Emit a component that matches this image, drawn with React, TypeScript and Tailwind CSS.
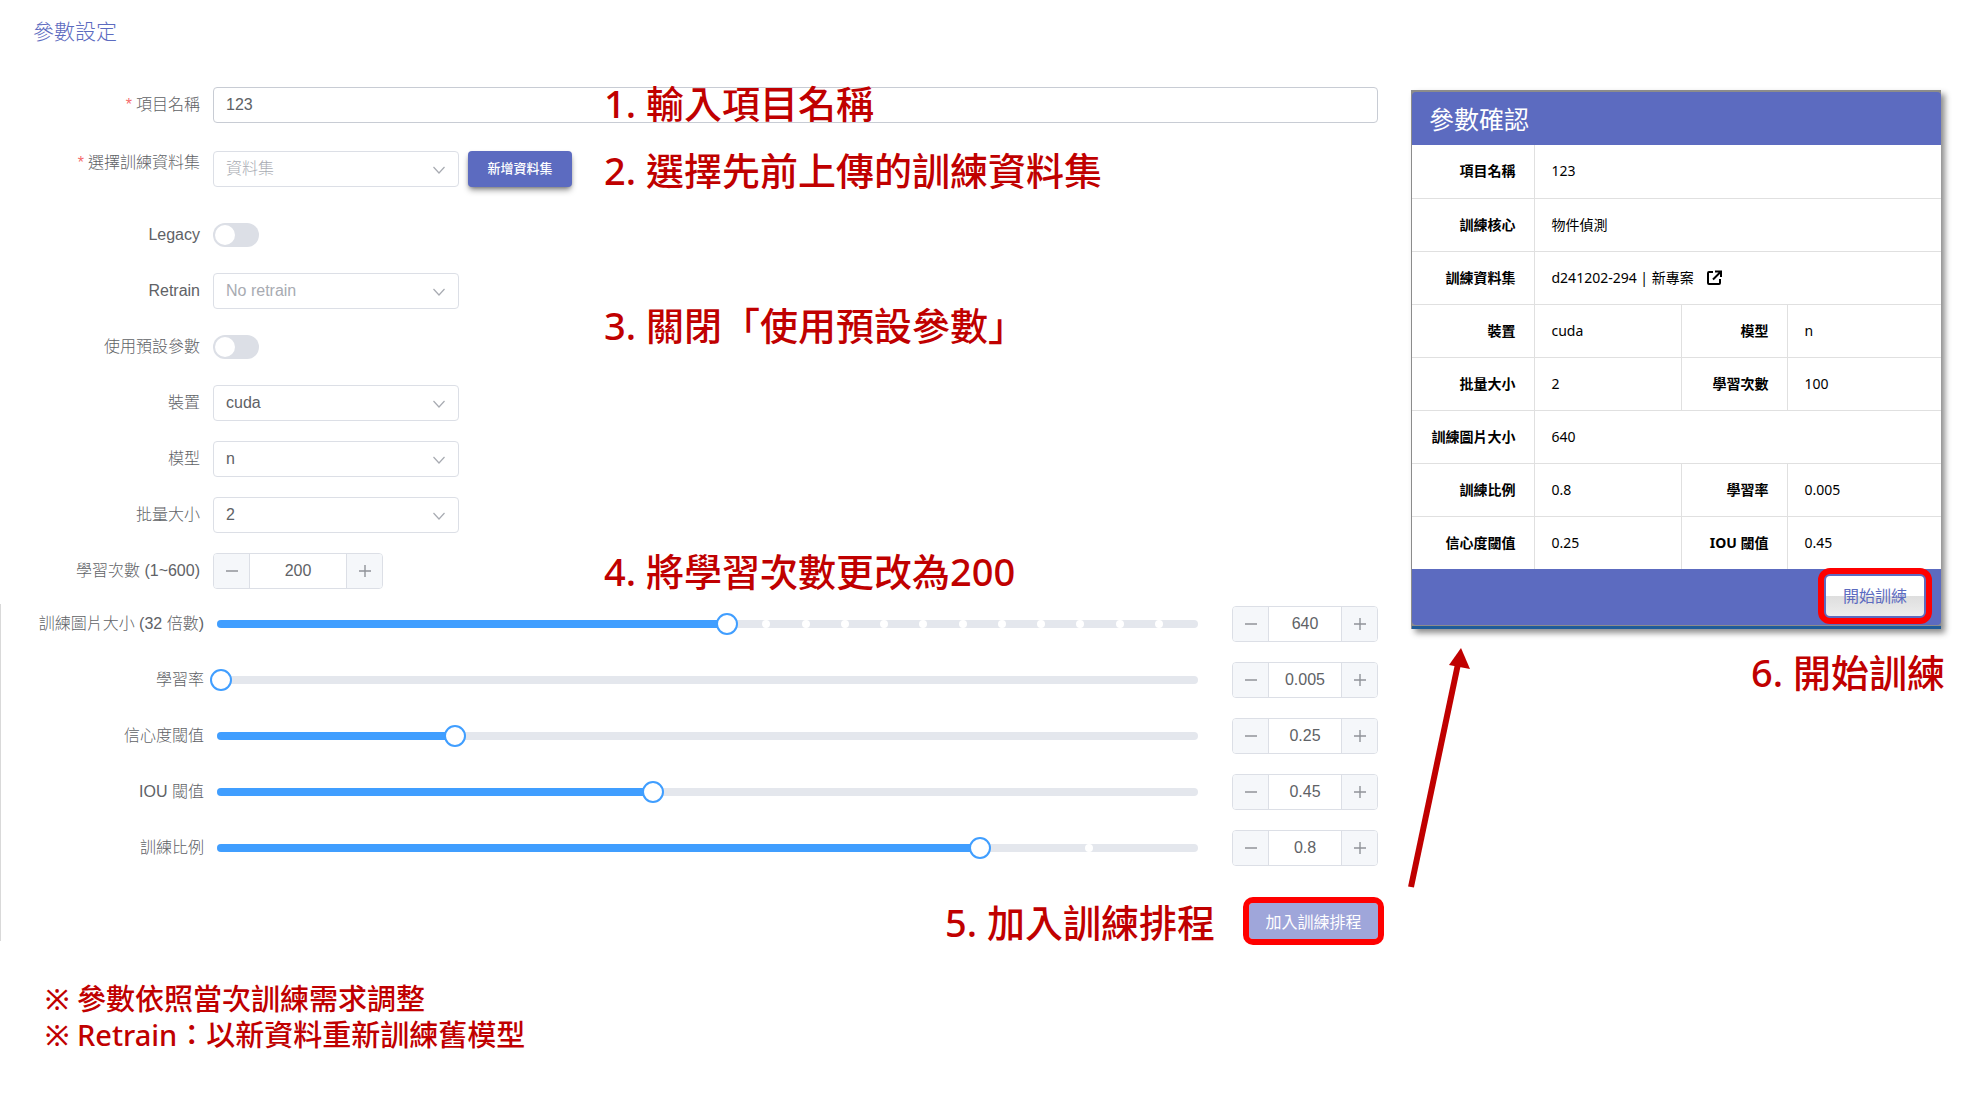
import { useState, type ReactNode } from "react";

const formFont = "font-['Liberation_Sans','Noto_Sans_CJK_TC',sans-serif]";
const noteFont = "font-['Noto_Sans','Noto_Sans_CJK_TC',sans-serif]";

function Note({ children, className = "" }: { children: ReactNode; className?: string }) {
  return (
    <p className={`${noteFont} text-[38px] leading-[48px] font-medium whitespace-nowrap text-[#c00000] ${className}`}>
      {children}
    </p>
  );
}

function Row({
  id,
  label,
  required,
  wide,
  top,
  children,
}: {
  id: string;
  label: string;
  required?: boolean;
  wide?: boolean;
  top?: boolean;
  children: ReactNode;
}) {
  return (
    <div className="flex h-9 items-center">
      <label
        htmlFor={id}
        className={`mr-[13px] shrink-0 text-right whitespace-nowrap ${wide ? "w-[203px]" : "w-[200px]"} ${top ? "self-start leading-5" : ""}`}
      >
        {required && <span className="mr-1 text-base text-[#f56c6c]">*</span>}
        {label}
      </label>
      {children}
    </div>
  );
}

function Select({ id, value, muted }: { id: string; value: string; muted?: boolean }) {
  return (
    <div className="relative w-[246px] shrink-0">
      <select
        id={id}
        defaultValue={value}
        className={`block h-9 w-full appearance-none rounded border border-[#dcdfe6] bg-white pr-9 pl-3 ${muted ? "text-[#a8abb2]" : "text-[#606266]"}`}
      >
        <option>{value}</option>
      </select>
      <svg
        className="pointer-events-none absolute top-3 right-3 h-3.5 w-3.5"
        viewBox="0 0 14 14"
        fill="none"
        stroke="#a8abb2"
        strokeWidth="1.2"
      >
        <path d="M0.500 4l5.500 6 5.500-6" />
      </svg>
    </div>
  );
}

function Switch({ id }: { id: string }) {
  return (
    <input
      id={id}
      type="checkbox"
      role="switch"
      className="relative h-6 w-[46px] appearance-none rounded-full bg-[#dcdfe6] before:absolute before:top-0.5 before:left-0.5 before:h-5 before:w-5 before:rounded-full before:bg-white checked:bg-[#409eff] checked:before:left-6"
    />
  );
}

function Stepper({
  id,
  label,
  value,
  onStep,
  onChange,
  wide,
}: {
  id: string;
  label: string;
  value: string;
  onStep: (direction: number) => void;
  onChange: (text: string) => void;
  wide?: boolean;
}) {
  const button = "flex w-9 shrink-0 items-center justify-center bg-[#f5f7fa]";
  return (
    <div
      className={`flex h-9 shrink-0 overflow-hidden rounded border border-[#dcdfe6] ${wide ? "w-[170px]" : "w-[146px]"}`}
    >
      <button type="button" aria-label={`${label} −`} onClick={() => onStep(-1)} className={`${button} border-r border-[#dcdfe6]`}>
        <svg className="h-3.5 w-3.5" viewBox="0 0 14 14" stroke="#909399" strokeWidth="1.4">
          <path d="M1 7h12" />
        </svg>
      </button>
      <input
        id={id}
        aria-label={label}
        value={value}
        onChange={(e) => onChange(e.target.value)}
        className="w-0 min-w-0 flex-1 bg-white text-center"
      />
      <button type="button" aria-label={`${label} +`} onClick={() => onStep(1)} className={`${button} border-l border-[#dcdfe6]`}>
        <svg className="h-3.5 w-3.5" viewBox="0 0 14 14" stroke="#909399" strokeWidth="1.4">
          <path d="M1 7h12M7 1v12" />
        </svg>
      </button>
    </div>
  );
}

type SliderSpec = {
  id: string;
  label: string;
  min: number;
  max: number;
  step: number;
  start: number;
  stops?: number;
};

const sliders: SliderSpec[] = [
  { id: "imgsz", label: "訓練圖片大小 (32 倍數)", min: 224, max: 1024, step: 32, start: 640, stops: 25 },
  { id: "lr", label: "學習率", min: 0.001, max: 1, step: 0.001, start: 0.005 },
  { id: "conf", label: "信心度閾值", min: 0.01, max: 1, step: 0.01, start: 0.25 },
  { id: "iou", label: "IOU 閾值", min: 0.01, max: 1, step: 0.01, start: 0.45 },
  { id: "ratio", label: "訓練比例", min: 0.1, max: 1, step: 0.1, start: 0.8, stops: 9 },
];

function SliderRow({ spec }: { spec: SliderSpec }) {
  const [value, setValue] = useState(spec.start);
  const { min, max, step, stops = 0 } = spec;
  const set = (next: number) => {
    if (!Number.isNaN(next)) setValue(Number(Math.min(max, Math.max(min, next)).toFixed(3)));
  };
  const percent = ((value - min) / (max - min)) * 100;
  const marks = Array.from({ length: Math.max(0, stops - 1) }, (_, i) => ((i + 1) / stops) * 100).filter(
    (mark) => mark > percent + 1,
  );
  return (
    <Row id={spec.id} label={spec.label} wide>
      <div className="relative mr-[34px] h-2 min-w-0 flex-1 rounded-full bg-[#e4e7ed]">
        <div className="h-2 rounded-full bg-[#409eff]" style={{ width: `${percent}%` }} />
        {marks.map((mark) => (
          <span
            key={mark}
            className="absolute top-0 h-2 w-2 -translate-x-1/2 rounded-full bg-white"
            style={{ left: `${mark}%` }}
          />
        ))}
        <input
          id={spec.id}
          type="range"
          min={min}
          max={max}
          step={step}
          value={value}
          onChange={(e) => set(Number(e.target.value))}
          className="absolute -top-2 -left-[11px] h-6 w-[calc(100%+22px)] appearance-none bg-transparent [&::-webkit-slider-thumb]:h-[22px] [&::-webkit-slider-thumb]:w-[22px] [&::-webkit-slider-thumb]:appearance-none [&::-webkit-slider-thumb]:rounded-full [&::-webkit-slider-thumb]:border-2 [&::-webkit-slider-thumb]:border-[#409eff] [&::-webkit-slider-thumb]:bg-white"
        />
      </div>
      <Stepper
        id={`${spec.id}-value`}
        label={spec.label}
        value={String(value)}
        onStep={(direction) => set(value + direction * step)}
        onChange={(text) => set(Number(text))}
      />
    </Row>
  );
}

function SettingsForm() {
  const [epochs, setEpochs] = useState(200);
  const setEpochCount = (next: number) => {
    if (!Number.isNaN(next)) setEpochs(Math.min(600, Math.max(1, next)));
  };
  return (
    <form
      className={`${formFont} min-w-0 flex-1 text-base font-light text-[#606266]`}
      onSubmit={(e) => e.preventDefault()}
    >
      <h1 className="pt-4 pl-[33px] text-[21px] leading-8 text-[#5c6bc0]">參數設定</h1>

      <div className="relative mt-[39px]">
        <Row id="name" label="項目名稱" required>
          <input
            id="name"
            defaultValue="123"
            className="h-9 min-w-0 flex-1 rounded border border-[#c8ccd4] bg-white px-3"
          />
        </Row>
        <Note className="pointer-events-none absolute -top-2 left-[604px]">1. 輸入項目名稱</Note>
      </div>

      <div className="mt-7">
        <Row id="dataset" label="選擇訓練資料集" required top>
          <Select id="dataset" value="資料集" muted />
          <button
            type="button"
            className="ml-[9px] h-9 w-[104px] shrink-0 rounded bg-[#5c6bc0] text-[13px] font-medium text-white shadow-md shadow-black/40"
          >
            新增資料集
          </button>
          <Note className="ml-8 pt-0.5">2. 選擇先前上傳的訓練資料集</Note>
        </Row>
      </div>

      <div className="mt-[30px] flex flex-col gap-5">
        <Row id="legacy" label="Legacy">
          <Switch id="legacy" />
        </Row>
        <div className="flex items-center">
          <div className="flex w-[459px] flex-col gap-5">
            <Row id="retrain" label="Retrain">
              <Select id="retrain" value="No retrain" muted />
            </Row>
            <Row id="defaults" label="使用預設參數">
              <Switch id="defaults" />
            </Row>
          </div>
          <Note className="ml-[145px] pt-3">3. 關閉「使用預設參數」</Note>
        </div>
        <Row id="device" label="裝置">
          <Select id="device" value="cuda" />
        </Row>
        <Row id="model" label="模型">
          <Select id="model" value="n" />
        </Row>
        <Row id="batch" label="批量大小">
          <Select id="batch" value="2" />
        </Row>
        <Row id="epochs" label="學習次數 (1~600)">
          <Stepper
            id="epochs"
            label="學習次數"
            value={String(epochs)}
            onStep={(direction) => setEpochCount(epochs + direction)}
            onChange={(text) => setEpochCount(Number(text))}
            wide
          />
          <Note className="ml-[221px]">4. 將學習次數更改為200</Note>
        </Row>
      </div>

      <div className="mt-[15px] flex flex-col gap-5 border-l border-[#d9d9d9] py-0.5">
        {sliders.map((spec) => (
          <SliderRow key={spec.id} spec={spec} />
        ))}
        <div className="mt-[17px] flex h-9 items-center justify-end">
          <Note className="mr-[34px] pt-0.5">5. 加入訓練排程</Note>
          <button
            type="submit"
            className="h-9 w-[129px] rounded-sm bg-[#9fa6da] pt-1 font-normal text-white outline-6 outline-[#ff0000]"
          >
            加入訓練排程
          </button>
        </div>
      </div>

      <div className={`${noteFont} mt-10 pl-[45px] text-[29px] leading-9 font-medium text-[#c00000]`}>
        <p>※ 參數依照當次訓練需求調整</p>
        <p>※ Retrain：以新資料重新訓練舊模型</p>
      </div>
    </form>
  );
}

const summary: [string, ReactNode, string?, string?][] = [
  ["項目名稱", "123"],
  ["訓練核心", "物件偵測"],
  [
    "訓練資料集",
    <span key="dataset" className="flex items-center gap-3">
      d241202-294 | 新專案
      <a href="#dataset" aria-label="新專案">
        <svg className="h-4 w-4" viewBox="0 0 16 16" fill="none" stroke="#000" strokeWidth="2">
          <path d="M7 2H3Q2 2 2 3v10q0 1 1 1h10q1 0 1-1V9" />
          <path d="M9 1.500H15V7M14.500 2L7 9.500" />
        </svg>
      </a>
    </span>,
  ],
  ["裝置", "cuda", "模型", "n"],
  ["批量大小", "2", "學習次數", "100"],
  ["訓練圖片大小", "640"],
  ["訓練比例", "0.8", "學習率", "0.005"],
  ["信心度閾值", "0.25", "IOU 閾值", "0.45"],
];

function ConfirmPanel() {
  const th = "border-r border-[#e0e0e0] px-[18px] text-right font-bold whitespace-nowrap";
  const td = "px-[17px] whitespace-nowrap";
  return (
    <section
      className={`${noteFont} border-t-2 border-l border-[#8c8c8c] bg-[#8c8c8c] text-sm text-black shadow-[4px_4px_6px_rgba(0,0,0,0.45)]`}
    >
      <h2 className="h-[53px] rounded-t bg-[#5c6bc0] px-[17px] text-[25px] leading-[55px] text-white">參數確認</h2>
      <table className="w-full table-fixed border-collapse bg-white">
        <colgroup>
          <col className="w-[122px]" />
          <col className="w-[147px]" />
          <col className="w-[106px]" />
          <col />
        </colgroup>
        <tbody>
          {summary.map(([label, value, label2, value2]) => (
            <tr key={label} className="h-[53px] border-b border-[#e0e0e0] last:border-b-0">
              <th scope="row" className={th}>
                {label}
              </th>
              <td colSpan={label2 ? 1 : 3} className={label2 ? `${td} border-r border-[#e0e0e0]` : td}>
                {value}
              </td>
              {label2 && (
                <>
                  <th scope="row" className={th}>
                    {label2}
                  </th>
                  <td className={td}>{value2}</td>
                </>
              )}
            </tr>
          ))}
        </tbody>
      </table>
      <div className="flex h-14 items-start justify-end rounded-b bg-[#5c6bc0] pt-[7px] pr-[17px]">
        <button
          type="button"
          className="relative h-10 w-[98px] rounded-sm bg-linear-to-b from-white from-50% via-[#dedede] via-50% to-[#ededed] text-base text-[#5c6bc0] outline-6 outline-offset-2 outline-[#ff0000]"
        >
          開始訓練
        </button>
      </div>
      <div className="mt-px h-[3px] bg-[#1f5c99]" />
    </section>
  );
}

export default function App() {
  return (
    <main className="flex items-start bg-white pr-[30px]">
      <SettingsForm />
      <aside className="mt-[90px] ml-[33px] w-[530px] shrink-0">
        <ConfirmPanel />
        <div className="mt-[19px] flex items-start justify-between">
          <svg className="h-60 w-16 overflow-visible" viewBox="0 0 64 240" fill="#c00000">
            <path d="M50 0L59 21L38 17Z" />
            <path d="M0 239L47 16" stroke="#c00000" strokeWidth="6" />
          </svg>
          <Note className="-mr-1">6. 開始訓練</Note>
        </div>
      </aside>
    </main>
  );
}
